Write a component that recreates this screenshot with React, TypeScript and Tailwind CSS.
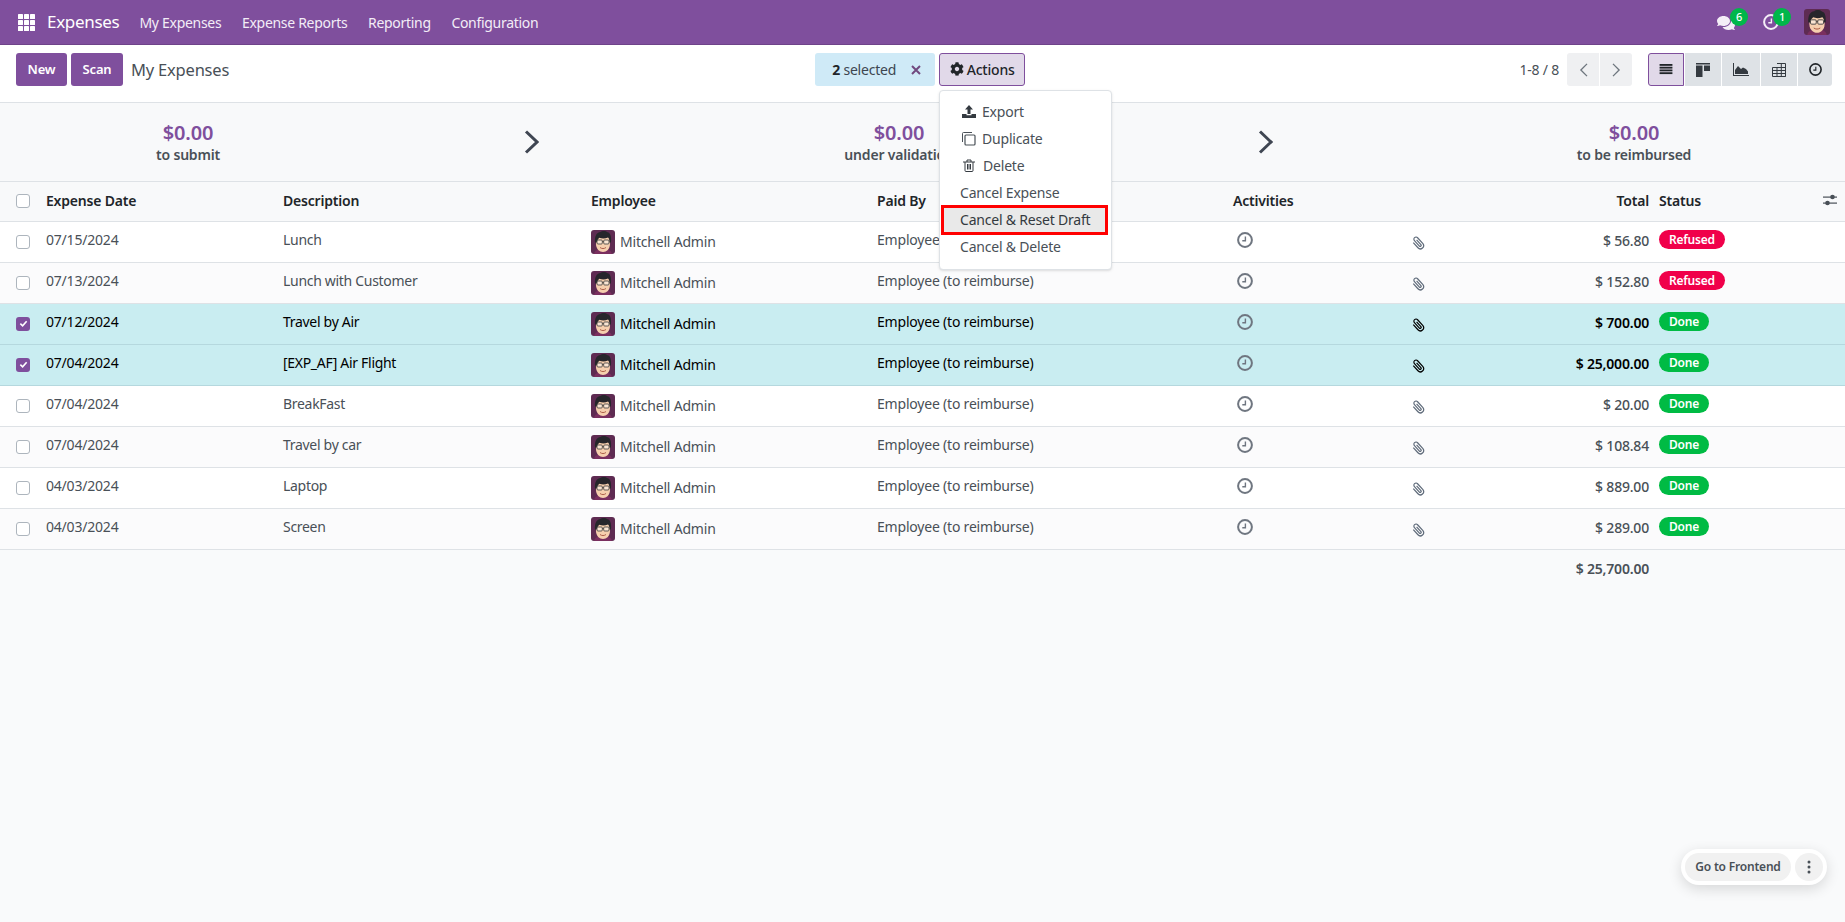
import React from "react";
import { FaCog, FaComments } from "react-icons/fa";

function Avatar({ size = "w-[24px] h-[24px]" }: { size?: string }) {
  return (
    <svg viewBox="0 0 24 24" className={`${size} rounded-[3px] shrink-0`}>
      <rect width="24" height="24" fill="#5e2b52" />
      <path d="M3 24c.5-3 3-5 9-5s8.500 2 9 5z" fill="#7a2f5f" />
      <path d="M5 10c0-4 3-6 7-6s7 2 7 6v4c0 5-3.500 8-7 8s-7-3-7-8z" fill="#f6cfae" />
      <path d="M4 12.500C3.500 6 5.500 2.500 9.500 2c1.500-1.200 5-1.500 7 .3 3 .5 4 4.500 3.500 10.200h-1.500c0-2.500-.4-4-1.500-5-3 1.300-6.500 1.100-8.500.2-1.200 1-2.500 2.500-2.900 4.800z" fill="#26262b" />
      <rect x="6" y="10" width="5.300" height="4" rx="1" fill="#fff" fillOpacity=".45" stroke="#3a3a3a" strokeWidth=".8" />
      <rect x="12.700" y="10" width="5.300" height="4" rx="1" fill="#fff" fillOpacity=".45" stroke="#3a3a3a" strokeWidth=".8" />
      <path d="M11.300 11.400h1.400" stroke="#3a3a3a" strokeWidth=".8" />
      <path d="M9 17.500c1.800 1.400 4.200 1.400 6 0" stroke="#a5543f" strokeWidth=".9" fill="none" />
    </svg>
  );
}

function Clock({ className = "" }: { className?: string }) {
  return (
    <svg viewBox="0 0 16 16" className={className} fill="none" stroke="currentColor">
      <circle cx="8" cy="8" r="6.900" strokeWidth="2" />
      <path d="M8.400 4.500v4.200H5.300" strokeWidth="1.400" />
    </svg>
  );
}

function Clip({ className = "" }: { className?: string }) {
  return (
    <svg viewBox="0 0 14 14" className={className} fill="none" stroke="currentColor" strokeWidth="1.200">
      <g transform="rotate(-42 7 7)">
        <path d="M3.800 3.500v7a3.200 3.200 0 0 0 6.400 0V2.800a2.100 2.100 0 0 0-4.200 0v7.400a1 1 0 0 0 2 0V3.800" />
      </g>
    </svg>
  );
}

function Box({ checked }: { checked?: boolean }) {
  return checked ? (
    <span className="flex h-[14px] w-[14px] items-center justify-center rounded-[3px] bg-[#7f4f9d]">
      <svg viewBox="0 0 10 10" className="h-[9px] w-[9px]" fill="none" stroke="#fff" strokeWidth="1.800">
        <path d="M1.500 5.200 4 7.500l4.500-5" />
      </svg>
    </span>
  ) : (
    <span className="block h-[14px] w-[14px] rounded-[3px] border border-[#adb5bd] bg-white" />
  );
}

function Chevron() {
  return (
    <svg viewBox="0 0 15 24" className="h-[24px] w-[15px]" fill="none" stroke="#3f4652" strokeWidth="3">
      <path d="M2 1.500 13 12 2 22.500" />
    </svg>
  );
}

const rows = [
  ["07/15/2024", "Lunch", "$ 56.80", "Refused", false],
  ["07/13/2024", "Lunch with Customer", "$ 152.80", "Refused", false],
  ["07/12/2024", "Travel by Air", "$ 700.00", "Done", true],
  ["07/04/2024", "[EXP_AF] Air Flight", "$ 25,000.00", "Done", true],
  ["07/04/2024", "BreakFast", "$ 20.00", "Done", false],
  ["07/04/2024", "Travel by car", "$ 108.84", "Done", false],
  ["04/03/2024", "Laptop", "$ 889.00", "Done", false],
  ["04/03/2024", "Screen", "$ 289.00", "Done", false],
] as [string, string, string, string, boolean][];

function Stat({ label }: { label: string }) {
  return (
    <div className="flex flex-col items-center">
      <div className="text-[20px] leading-[24px] font-semibold text-[#7f4f9d]">$0.00</div>
      <div className="text-[14px] leading-[19px] font-semibold text-[#495057]">{label}</div>
    </div>
  );
}

const viewBtn = "flex h-full items-center justify-center bg-[#dee2e6] text-[#212529]";

export default function App() {
  return (
    <div className="flex min-h-[922px] flex-col bg-[#f9fafb] text-[14px] tracking-[-0.2px] text-[#495057] [font-family:'Noto_Sans',sans-serif] relative">
      <header className="flex h-[45px] items-center border-b border-[#6e4389] bg-[#7f4f9d] text-white">
        <svg viewBox="0 0 17 17" className="ml-[18px] h-[17px] w-[17px]" fill="#fff">
          {[0, 6, 12].flatMap((y) =>
            [0, 6, 12].map((x) => <rect key={`${x}-${y}`} x={x} y={y} width="5" height="5" rx=".6" />)
          )}
        </svg>
        <span className="ml-[12px] text-[17px] tracking-[-0.3px]">Expenses</span>
        <nav className="ml-[20px] flex gap-[20.7px] tracking-[-0.3px] text-[#f3edf7]">
          <span>My Expenses</span>
          <span>Expense Reports</span>
          <span>Reporting</span>
          <span>Configuration</span>
        </nav>
        <div className="ml-auto flex items-center">
          <div className="relative h-[26px] w-[46px]">
            <FaComments className="absolute left-[0px] top-[5px] h-[18px] w-[18px] text-[#f4eef7]" />
            <span className="absolute left-[13px] top-[-1px] flex h-[18px] w-[18px] items-center justify-center rounded-full bg-[#00b74a] text-[11px] font-medium">6</span>
          </div>
          <div className="relative h-[26px] w-[41px]">
            <Clock className="absolute left-[0px] top-[5px] h-[16px] w-[16px] text-[#f4eef7]" />
            <span className="absolute left-[10px] top-[-1px] flex h-[18px] w-[18px] items-center justify-center rounded-full bg-[#00b74a] text-[11px] font-medium">1</span>
          </div>
          <Avatar size="w-[26px] h-[26px]" />
          <span className="w-[15px]" />
        </div>
      </header>

      <div className="flex h-[58px] items-start border-b border-[#dee2e6] bg-white pt-[8px]">
        <button className="ml-[16px] h-[33px] w-[51px] rounded-[3px] bg-[#7f4f9d] text-[13px] font-semibold text-white">New</button>
        <button className="ml-[4px] h-[33px] w-[52px] rounded-[3px] bg-[#7f4f9d] text-[13px] font-semibold text-white">Scan</button>
        <span className="ml-[8px] text-[16.5px] leading-[33px] text-[#495057]">My Expenses</span>
        <div className="ml-[586px] flex h-[33px] w-[120px] items-center rounded-[3px] bg-[#cfeaf7] pl-[17px] text-[#3d4650]">
          <b className="font-bold text-[#212529]">2</b>&nbsp;selected
          <svg viewBox="0 0 10 10" className="ml-[15px] h-[10px] w-[10px]" fill="none" stroke="#71497f" strokeWidth="2">
            <path d="M1 1l8 8M9 1l-8 8" />
          </svg>
        </div>
        <button className="ml-[4px] flex h-[33px] w-[86px] items-center justify-center gap-[3px] rounded-[3px] border border-[#7f4f9d] bg-[#e1d9e9] pb-[1px] font-medium text-[#212529]">
          <FaCog className="h-[14px] w-[14px]" />
          Actions
        </button>
        <div className="ml-auto flex h-[33px] items-center">
          <span className="mr-[8px] text-[#495057]">1-8 / 8</span>
          <div className="flex h-full gap-[1px]">
            <span className="flex h-full w-[32px] items-center justify-center rounded-l-[3px] bg-[#eff0f2]">
              <svg viewBox="0 0 10 16" className="h-[14px] w-[9px]" fill="none" stroke="#6c757d" strokeWidth="1.500"><path d="M9 1 2 8l7 7" /></svg>
            </span>
            <span className="flex h-full w-[32px] items-center justify-center rounded-r-[3px] bg-[#eff0f2]">
              <svg viewBox="0 0 10 16" className="h-[14px] w-[9px]" fill="none" stroke="#6c757d" strokeWidth="1.500"><path d="M1 1l7 7-7 7" /></svg>
            </span>
          </div>
          <div className="ml-[16px] mr-[13px] flex h-full gap-[1px]">
            <span className="flex h-full w-[36px] items-center justify-center rounded-l-[3px] border border-[#7f4f9d] bg-[#e1d9e9] text-[#212529]">
              <svg viewBox="0 0 14 12" className="h-[11px] w-[14px]" fill="currentColor">
                <rect width="14" height="2" /><rect y="3" width="14" height="2" /><rect y="6" width="14" height="2" /><rect y="9" width="14" height="2" />
              </svg>
            </span>
            <span className={`${viewBtn} w-[36px]`}>
              <svg viewBox="0 0 14 14" className="h-[14px] w-[14px]" fill="#343a40">
                <rect width="14" height="1.500" /><rect y="2.500" width="6.500" height="11.500" /><rect x="8" y="2.500" width="6" height="5.500" />
              </svg>
            </span>
            <span className={`${viewBtn} w-[38px]`}>
              <svg viewBox="0 0 16 13" className="h-[13px] w-[16px]" fill="#343a40">
                <path d="M0 0h1v12h15v1H0z" /><path d="M2 11V7l3-4 3 3 2-1.500 3 1.500 2 2.500V11z" />
              </svg>
            </span>
            <span className={`${viewBtn} w-[36px]`}>
              <svg viewBox="0 0 14 14" className="h-[14px] w-[14px]" fill="none" stroke="#343a40">
                <path d="M.5 4.500h13v9H.5zM5 .5h8.500v13M.5 7.500h13M.5 10.500h13M5 4.500v9M9.300 .5v13" />
              </svg>
            </span>
            <span className={`${viewBtn} w-[34px] rounded-r-[3px]`}>
              <Clock className="h-[13px] w-[13px] text-[#212529]" />
            </span>
          </div>
        </div>
      </div>

      <div className="grid h-[79px] grid-cols-[376px_310px_426px_306px_1fr] items-center border-b border-[#dee2e6] bg-[#f8f9fa]">
        <Stat label="to submit" />
        <div className="flex justify-center"><Chevron /></div>
        <Stat label="under validation" />
        <div className="flex justify-center"><Chevron /></div>
        <div className="pl-[5px]"><Stat label="to be reimbursed" /></div>
      </div>

      <table className="w-[1845px] table-fixed border-collapse">
        <colgroup>
          <col className="w-[39px]" />
          <col className="w-[237px]" />
          <col className="w-[308px]" />
          <col className="w-[286px]" />
          <col className="w-[356px]" />
          <col className="w-[174px]" />
          <col className="w-[80px]" />
          <col className="w-[172px]" />
          <col className="w-[193px]" />
        </colgroup>
        <thead>
          <tr className="h-[39px] border-b border-[#dee2e6] bg-[#f8f9fa] text-left font-semibold text-[#212529]">
            <th className="pl-[16px]"><Box /></th>
            <th className="pb-[2px] pl-[7px] font-semibold">Expense Date</th>
            <th className="pb-[2px] pl-[7px] font-semibold">Description</th>
            <th className="pb-[2px] pl-[7px] font-semibold">Employee</th>
            <th className="pb-[2px] pl-[7px] font-semibold">Paid By</th>
            <th className="pb-[2px] pl-[7px] font-semibold">Activities</th>
            <th />
            <th className="pb-[2px] pr-[3px] text-right font-semibold">Total</th>
            <th className="pb-[2px] pl-[7px] font-semibold">
              <div className="flex items-center justify-between pr-[8px]">
                Status
                <svg viewBox="0 0 14 12" className="h-[12px] w-[14px]" fill="#495057">
                  <rect y="2.500" width="14" height="1.200" /><circle cx="9.500" cy="3" r="2.300" />
                  <rect y="8.500" width="14" height="1.200" /><circle cx="4.500" cy="9" r="2.300" />
                </svg>
              </div>
            </th>
          </tr>
        </thead>
        <tbody>
          {rows.map(([date, desc, total, status, sel], i) => (
            <tr
              key={i}
              className={`h-[41px] border-b ${
                sel
                  ? "border-[#b5d8de] bg-[#c9edf1] text-[#000]"
                  : `border-[#dee2e6] ${i % 2 ? "bg-[#fbfbfc]" : "bg-white"}`
              }`}
            >
              <td className="pl-[16px]"><Box checked={sel} /></td>
              <td className="pl-[7px] pb-[5px]">{date}</td>
              <td className="pl-[7px] pb-[5px] tracking-[-0.3px]">{desc}</td>
              <td className="pl-[7px]">
                <div className="flex items-center gap-[5px]">
                  <Avatar />
                  Mitchell Admin
                </div>
              </td>
              <td className="pl-[7px] pb-[5px]">Employee (to reimburse)</td>
              <td className="pl-[7px] pb-[3px]">
                <Clock className="ml-[4px] h-[16px] w-[16px] text-[#6f7680]" />
              </td>
              <td>
                <Clip className={`ml-[11px] mt-[2px] h-[14px] w-[14px] ${sel ? "text-black" : "text-[#5f6b7a]"}`} />
              </td>
              <td className={`pr-[3px] pb-[3px] text-right ${sel ? "font-semibold" : "font-medium"}`}>{total}</td>
              <td className="pl-[7px] pb-[6px]">
                <span
                  className={`inline-flex h-[19px] items-center rounded-full px-[10px] text-[12px] font-semibold text-white ${
                    status === "Refused" ? "bg-[#f0004a]" : "bg-[#00bb44]"
                  }`}
                >
                  {status}
                </span>
              </td>
            </tr>
          ))}
          <tr className="h-[40px]">
            <td colSpan={7} />
            <td className="pb-[2px] pr-[3px] text-right font-semibold text-[#495057]">$ 25,700.00</td>
            <td />
          </tr>
        </tbody>
      </table>

      <div className="absolute left-[939px] top-[90px] flex h-[180px] w-[173px] flex-col rounded-[4px] border border-[#dee2e6] bg-white pt-[7px] text-[#495057] shadow-sm">
        <div className="flex h-[27px] shrink-0 items-center pl-[22px]">
          <svg viewBox="0 0 14 13" className="mr-[6px] h-[13px] w-[14px]" fill="#343a40">
            <path d="M7 0l4 4.500H8.500V9h-3V4.500H3zM0 9h4.500v1.200h5V9H14v4H0z" />
          </svg>
          Export
        </div>
        <div className="flex h-[27px] shrink-0 items-center pl-[21px]">
          <svg viewBox="0 0 15 15" className="mr-[6px] h-[15px] w-[15px]" fill="none" stroke="#495057">
            <rect x="4" y="4" width="10" height="10" rx="1" strokeWidth="1.200" />
            <path d="M11 1.500H2.500a1 1 0 0 0-1 1V11" />
          </svg>
          Duplicate
        </div>
        <div className="flex h-[27px] shrink-0 items-center pl-[23px]">
          <svg viewBox="0 0 12 13" className="mr-[8px] h-[13px] w-[12px]" fill="none" stroke="#343a40">
            <path d="M0 3h12M2 3v8.500a1 1 0 0 0 1 1h6a1 1 0 0 0 1-1V3M4 3V1h4v2M4.500 5v5.500M6 5v5.500M7.500 5v5.500" />
          </svg>
          Delete
        </div>
        <div className="flex h-[26px] shrink-0 items-center pl-[20px]">Cancel Expense</div>
        <div className="ml-[1px] mr-[3px] flex h-[30px] shrink-0 items-center border-[3px] border-[#ff0000] bg-[#e9e9e9] pb-[1px] pl-[16px] text-[#343a40]">Cancel &amp; Reset Draft</div>
        <div className="flex h-[23px] shrink-0 items-center pl-[20px]">Cancel &amp; Delete</div>
      </div>

      <div className="absolute left-[1681px] top-[849px] flex h-[36px] w-[146px] items-center gap-[4px] rounded-full bg-white pl-[4px] shadow-[0_4px_14px_rgba(0,0,0,0.14)]">
        <span className="flex h-[28px] w-[106px] items-center justify-center rounded-full bg-[#f1f1f1] text-[12px] font-semibold text-[#495057]">Go to Frontend</span>
        <span className="flex h-[28px] w-[28px] items-center justify-center rounded-full bg-[#f1f1f1]">
          <svg viewBox="0 0 4 14" className="h-[14px] w-[4px]" fill="#495057">
            <circle cx="2" cy="2" r="1.500" /><circle cx="2" cy="7" r="1.500" /><circle cx="2" cy="12" r="1.500" />
          </svg>
        </span>
      </div>
    </div>
  );
}
